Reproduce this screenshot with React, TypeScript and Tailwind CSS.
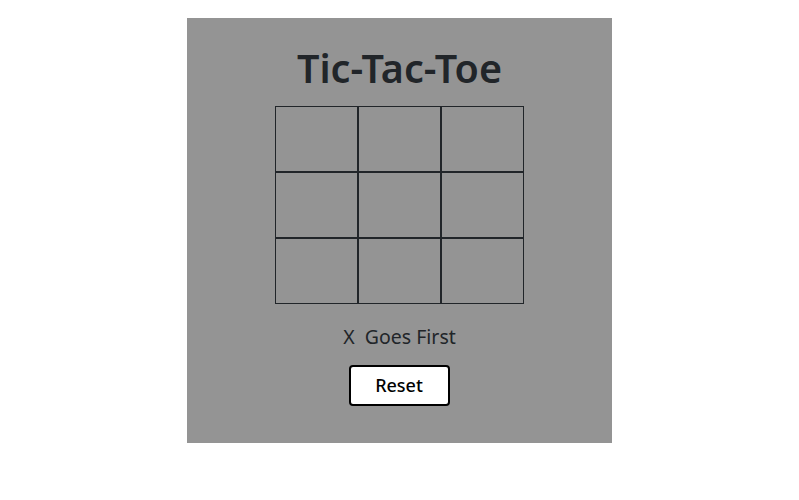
export default function App() {
  const cells = Array.from({ length: 9 }, (_, i) => i);

  return (
    <div className="flex justify-center pt-[18px] font-['Noto_Sans',sans-serif]">
      <div className="flex h-[425px] w-[425px] flex-col items-center bg-[#949494] pt-[26px]">
        <h1 className="text-[39.5px] leading-[48px] font-semibold text-[#212529]">Tic-Tac-Toe</h1>
        <div className="mt-[14px] mr-[1px] grid w-[249px] grid-cols-3">
          {cells.map((i) => (
            <div key={i} className="h-[66px] border border-[#212529]" />
          ))}
        </div>
        <p className="mt-[18px] text-[19.5px] leading-[30px] text-[#212529]">X&nbsp; Goes First</p>
        <button
          type="button"
          className="mt-[13px] mr-[1px] h-[41px] w-[101px] rounded-[4px] border-2 border-black bg-white text-[18px] font-medium text-black"
        >
          Reset
        </button>
      </div>
    </div>
  );
}
